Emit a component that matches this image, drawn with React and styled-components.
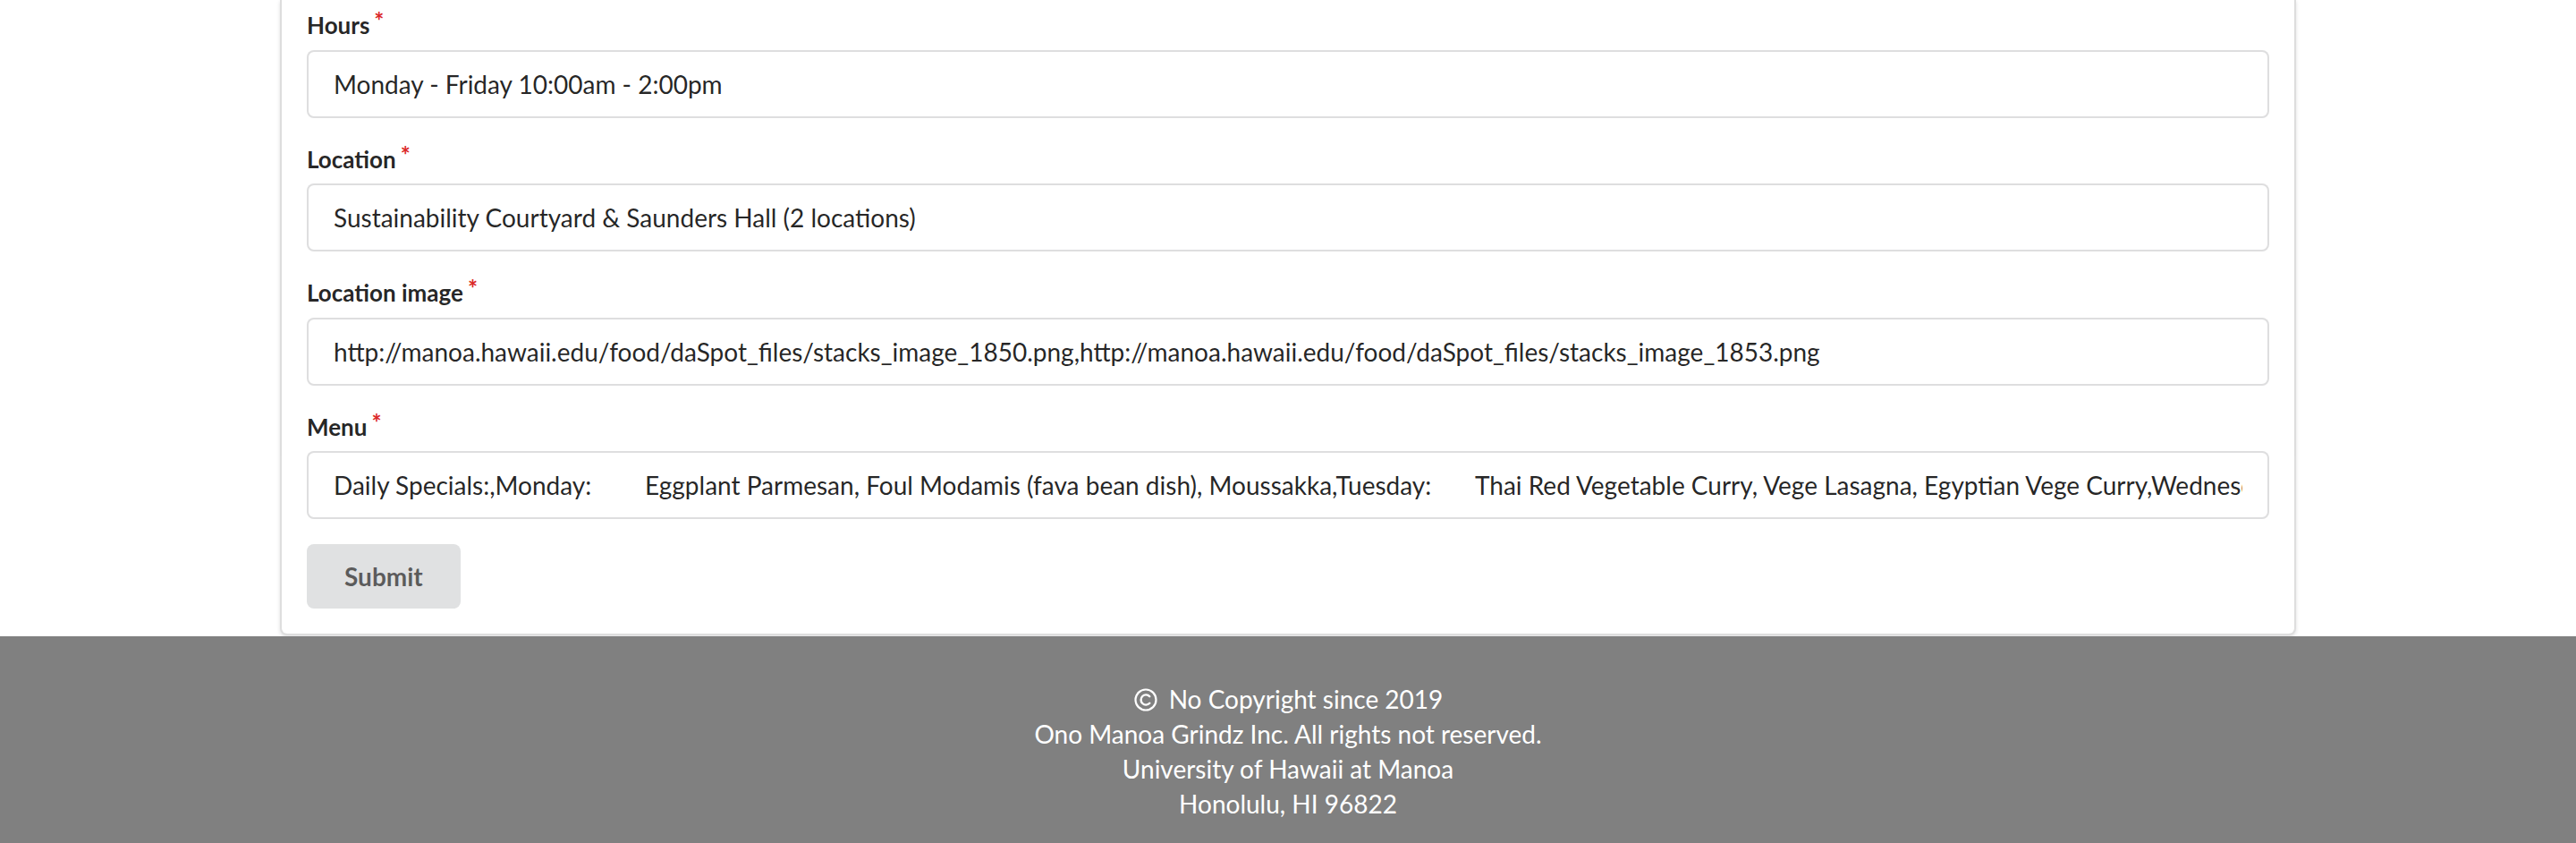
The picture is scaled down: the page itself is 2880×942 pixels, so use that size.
import React from "react";
import styled, { createGlobalStyle } from "styled-components";

const GlobalStyle = createGlobalStyle`
  html, body {
    margin: 0;
    padding: 0;
    background: #ffffff;
  }
  body {
    font-family: Lato, "Helvetica Neue", Arial, sans-serif;
    color: rgba(0, 0, 0, 0.87);
  }
  * { box-sizing: border-box; }
`;

const Page = styled.div`
  display: flex;
  flex-direction: column;
  min-height: 942px;
`;

const Container = styled.main`
  width: 2254px;
  margin: 0 auto;
`;

const Segment = styled.form`
  background: #fff;
  border: 2px solid rgba(34, 36, 38, 0.15);
  border-top: none;
  border-radius: 0 0 8px 8px;
  box-shadow: 0 2px 4px 0 rgba(34, 36, 38, 0.15);
  padding: 10px 28px 28px;
  display: flex;
  flex-direction: column;
`;

const Field = styled.div`
  display: flex;
  flex-direction: column;
  margin-bottom: 28px;
`;

const Label = styled.label`
  display: block;
  font-family: Lato, sans-serif;
  font-size: 26px;
  font-weight: 700;
  line-height: 37.5px;
  color: rgba(0, 0, 0, 0.87);
  margin: 0 0 8px;

  ${(p) =>
    p.$required &&
    `
    &::after {
      content: "*";
      display: inline-block;
      vertical-align: top;
      margin: -5px 0 0 5px;
      color: #db2828;
    }
  `}
`;

const Input = styled.input`
  width: 100%;
  margin: 0;
  font-family: Lato, sans-serif;
  font-size: 28px;
  line-height: 34px;
  padding: 19px 28px;
  height: 76px;
  color: rgba(0, 0, 0, 0.87);
  background: #fff;
  border: 2px solid rgba(34, 36, 38, 0.15);
  border-radius: 8px;
  outline: none;
  tab-size: 58px;
`;

const Button = styled.button`
  align-self: flex-start;
  margin: 0;
  font-family: Lato, sans-serif;
  font-size: 28px;
  font-weight: 700;
  line-height: 28px;
  padding: 22px 42px;
  background: #e0e1e2;
  color: rgba(0, 0, 0, 0.6);
  border: none;
  border-radius: 8px;
  cursor: pointer;
`;

const Footer = styled.footer`
  margin-top: 1px;
  flex: 1;
  background: #808080;
  color: #ffffff;
  text-align: center;
  font-family: Lato, sans-serif;
  font-size: 28px;
  line-height: 39px;
  padding: 51px 0 60px;
`;

const FooterLine = styled.div`
  display: flex;
  justify-content: center;
  align-items: center;
`;

const CopyIcon = styled.svg`
  width: 28px;
  height: 28px;
  margin-right: 12px;
`;

const fields = [
  { label: "Hours", value: "Monday - Friday 10:00am - 2:00pm" },
  { label: "Location", value: "Sustainability Courtyard & Saunders Hall (2 locations)" },
  {
    label: "Location image",
    value:
      "http://manoa.hawaii.edu/food/daSpot_files/stacks_image_1850.png,http://manoa.hawaii.edu/food/daSpot_files/stacks_image_1853.png",
  },
  {
    label: "Menu",
    value:
      "Daily Specials:,Monday:\tEggplant Parmesan, Foul Modamis (fava bean dish), Moussakka,Tuesday:\tThai Red Vegetable Curry, Vege Lasagna, Egyptian Vege Curry,Wednesday:\tSpinach Pie, Vege Chili, Pasta Primavera",
  },
];

export default function App() {
  return (
    <Page>
      <GlobalStyle />
      <Container>
        <Segment onSubmit={(e) => e.preventDefault()}>
          {fields.map((f) => (
            <Field key={f.label}>
              <Label $required>{f.label}</Label>
              <Input type="text" defaultValue={f.value} />
            </Field>
          ))}
          <Button type="submit">Submit</Button>
        </Segment>
      </Container>
      <Footer>
        <FooterLine>
          <CopyIcon viewBox="0 0 28 28" aria-hidden="true">
            <circle cx="14" cy="14" r="11.5" fill="none" stroke="#fff" strokeWidth="2.2" />
            <path
              d="M18.3 10.2 A5.6 5.6 0 1 0 18.3 17.8"
              fill="none"
              stroke="#fff"
              strokeWidth="2.4"
              strokeLinecap="round"
            />
          </CopyIcon>
          No Copyright since 2019
        </FooterLine>
        <FooterLine>Ono Manoa Grindz Inc. All rights not reserved.</FooterLine>
        <FooterLine>University of Hawaii at Manoa</FooterLine>
        <FooterLine>Honolulu, HI 96822</FooterLine>
      </Footer>
    </Page>
  );
}
